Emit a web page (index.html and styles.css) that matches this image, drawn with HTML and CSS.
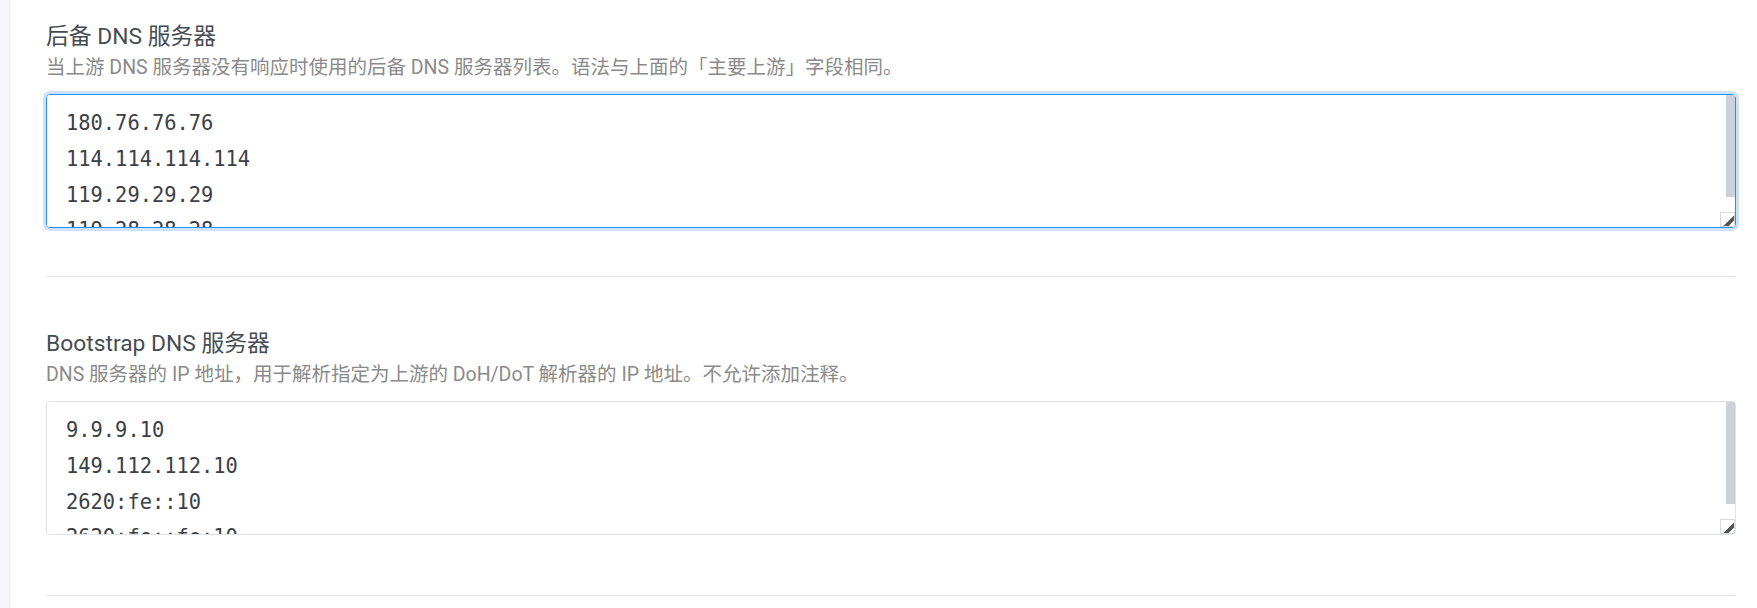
FILE: index.html
```html
<!DOCTYPE html>
<html lang="zh-CN">
<head>
    <meta charset="UTF-8">
    <meta name="viewport" content="width=device-width, initial-scale=1.0">
    <title>DNS 设置</title>
    <link rel="stylesheet" href="styles.css">
</head>
<body>
<div class="layout">
    <aside class="sidebar"></aside>

    <main class="content">
        <!-- fallback upstreams -->
        <section class="field">
            <h3 class="field-title">后备 DNS 服务器</h3>
            <p class="field-desc">当上游 DNS 服务器没有响应时使用的后备 DNS 服务器列表。语法与上面的「主要上游」字段相同。</p>
            <div class="input-wrap">
                <textarea class="field-input is-focused" spellcheck="false">180.76.76.76
114.114.114.114
119.29.29.29
119.28.28.28</textarea>
                <span class="scroll-thumb" style="height: 102px"></span>
            </div>
        </section>

        <!-- bootstrap resolvers -->
        <section class="field">
            <h3 class="field-title">Bootstrap DNS 服务器</h3>
            <p class="field-desc">DNS 服务器的 IP 地址，用于解析指定为上游的 DoH/DoT 解析器的 IP 地址。不允许添加注释。</p>
            <div class="input-wrap">
                <textarea class="field-input" spellcheck="false">9.9.9.10
149.112.112.10
2620:fe::10
2620:fe::fe:10</textarea>
                <span class="scroll-thumb" style="height: 102px"></span>
            </div>
            <div class="field-error"></div>
        </section>
    </main>
</div>
</body>
</html>
```

FILE: styles.css
```css
html, body {
    margin: 0;
    padding: 0;
    background: #fff;
    overflow: hidden;
}

body {
    font-family: Roboto, "Noto Sans CJK SC", sans-serif;
    color: #484e55;
}

.layout {
    display: flex;
    min-height: 608px;
}

.sidebar {
    width: 9px;
    flex-shrink: 0;
    background-color: #f5f6fa;
    border-right: 1px solid #eceef3;
}

.content {
    flex: 1;
    padding: 22px 21px 0 36px;
}

.field {
    padding-bottom: 48px;
    border-bottom: 1px solid #e4e7ec;
}

.field + .field {
    padding-top: 52px;
}

.field-title {
    margin: 0;
    font-size: 22.8px;
    font-weight: normal;
    line-height: 30px;
    color: #464c53;
}

.field-desc {
    margin: 2px 0 0;
    font-size: 19.5px;
    line-height: 28px;
    color: #8a8a8a;
}

.input-wrap {
    position: relative;
    margin-top: 12px;
}

.field-input {
    display: block;
    box-sizing: border-box;
    width: 100%;
    height: 134px;
    padding: 11px 19px 7px;
    font-family: "DejaVu Sans Mono", monospace;
    font-size: 20.4px;
    line-height: 35.8px;
    color: #3b4047;
    background: #fff;
    border: 1px solid #dfe2e7;
    border-radius: 4px;
    outline: none;
    resize: vertical;
    overflow-y: scroll;
}

.field-input.is-focused {
    border-color: #2190f5;
    box-shadow: 0 0 0 3px rgba(0, 110, 220, 0.2);
}

.field-error {
    height: 12px;
}

/* thin scrollbar inside the inputs */
.field-input::-webkit-scrollbar {
    width: 9px;
}

.field-input::-webkit-scrollbar-track {
    background: #fff;
}

.field-input::-webkit-scrollbar-thumb {
    background: #cdd1d8;
}

.scroll-thumb {
    position: absolute;
    top: 1px;
    right: 1px;
    width: 9px;
    background: #cdd1d8;
    pointer-events: none;
}

.field-input::-webkit-resizer {
    background:
        linear-gradient(135deg, transparent 58%, #555 58%, #555 78%, transparent 78%),
        #fff;
    border: 1px solid #d6d9de;
}
```
